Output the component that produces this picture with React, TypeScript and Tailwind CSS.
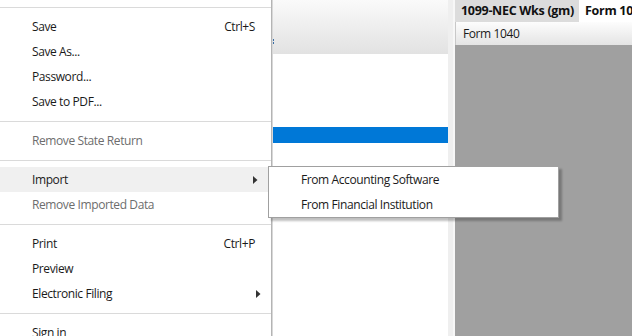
import React from "react";

const font = { fontFamily: '"Open Sans", "Noto Sans", sans-serif' };

function Arrow() {
  return (
    <svg width="5" height="8" viewBox="0 0 5 8" className="absolute right-[10px] top-1/2 -translate-y-1/2">
      <path d="M0 0 L4.5 4 L0 8 Z" fill="#333" />
    </svg>
  );
}

function Item({ label, shortcut, disabled, arrow, active }: { label: string; shortcut?: string; disabled?: boolean; arrow?: boolean; active?: boolean }) {
  return (
    <div className={`relative flex h-[25px] shrink-0 items-center pl-[32px] pr-[16px] ${active ? "bg-[#f0f0f0] mr-[3px]" : ""} ${disabled ? "text-[#6d6d6d]" : "text-[#1a1a1a]"}`}>
      <span className="flex-1">{label}</span>
      {shortcut && <span>{shortcut}</span>}
      {arrow && <Arrow />}
    </div>
  );
}

function Sep() {
  return (
    <div className="flex h-[14px] shrink-0 items-center">
      <div className="h-px w-full bg-[#dadada]" />
    </div>
  );
}

export default function App() {
  return (
    <div className="relative flex h-[336px] w-[632px] overflow-hidden bg-white text-[12px] leading-none tracking-[-0.4px]" style={font}>
      {/* File menu */}
      <div className="flex w-[272px] shrink-0 flex-col border-r border-[#b4b4b4] bg-white">
        <Sep />
        <Item label="Save" shortcut="Ctrl+S" />
        <Item label="Save As..." />
        <Item label="Password..." />
        <Item label="Save to PDF..." />
        <Sep />
        <Item label="Remove State Return" disabled />
        <Sep />
        <Item label="Import" arrow active />
        <Item label="Remove Imported Data" disabled />
        <Sep />
        <Item label="Print" shortcut="Ctrl+P" />
        <Item label="Preview" />
        <Item label="Electronic Filing" arrow />
        <Sep />
        <Item label="Sign in" />
      </div>

      {/* left panel */}
      <div className="relative flex w-[176px] shrink-0 flex-col border-l border-[#d8d8d8] bg-white">
        <div className="h-[54px] bg-gradient-to-b from-[#fafafa] to-[#e2e2e2]" />
        <div className="mt-[73px] h-[16px] bg-[#0078d7]" />
        <span className="absolute left-0 top-[39px] h-[2px] w-px bg-[#3a6ea5]" />
        <span className="absolute left-0 top-[42px] h-[2px] w-px bg-[#3a6ea5]" />
      </div>

      {/* splitter strip */}
      <div className="flex w-[7px] shrink-0">
        <div className="w-[5px] bg-[#efefef]" />
        <div className="w-[2px] bg-[#f7f7f7]" />
      </div>

      {/* right area */}
      <div className="flex flex-1 flex-col bg-[#a0a0a0]">
        <div className="flex h-[22px] shrink-0 text-[12.5px] font-bold tracking-[-0.3px] text-[#111]">
          <div className="flex w-[124px] shrink-0 items-center overflow-hidden whitespace-nowrap bg-[#dcdcdc] pl-[6px]">1099-NEC Wks (gm)</div>
          <div className="flex flex-1 items-center overflow-hidden whitespace-nowrap bg-white pl-[6px]">Form 1040</div>
        </div>
        <div className="flex h-[23px] shrink-0 items-center border-l border-[#c8c8c8] bg-gradient-to-b from-[#fdfdfd] to-[#e4e4e4] pl-[7px] text-[#1a1a1a]">
          Form 1040
        </div>
        <div className="flex-1" />
      </div>

      {/* submenu */}
      <div className="absolute left-[268px] top-[166px] flex w-[291px] flex-col border border-[#a0a0a0] bg-white shadow-[3px_3px_2px_rgba(0,0,0,0.25)]">
        <div className="flex h-[25px] items-center pl-[32px] text-[#1a1a1a]">From Accounting Software</div>
        <div className="flex h-[25px] items-center pl-[32px] text-[#1a1a1a]">From Financial Institution</div>
      </div>
    </div>
  );
}
